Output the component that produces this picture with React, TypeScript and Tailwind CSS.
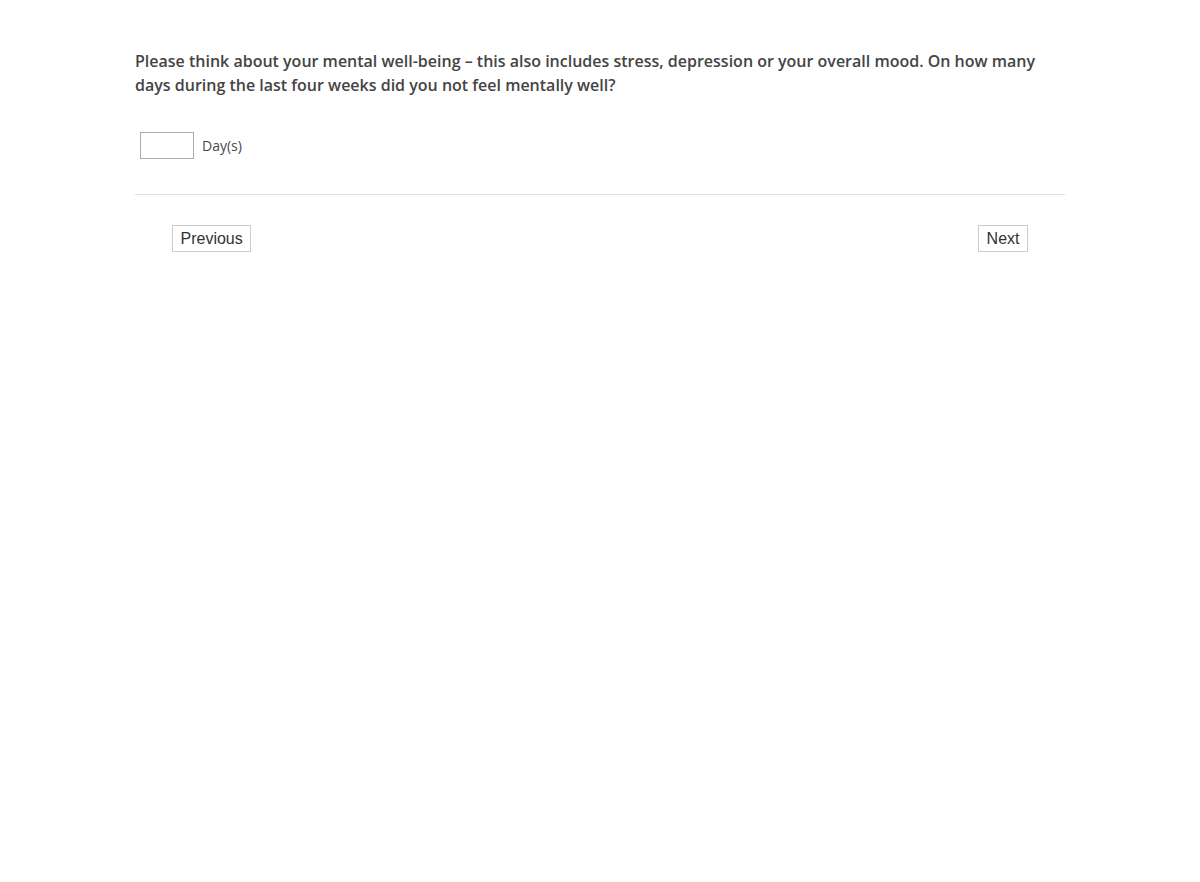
import React from "react";

export default function App() {
  return (
    <div className="min-h-[882px] bg-white">
      <div className="mx-auto w-[930px] pt-[49px]">
        <p
          className="text-[16px] leading-[24px] font-semibold text-[#444444]"
          style={{ fontFamily: '"Open Sans", sans-serif' }}
        >
          Please think about your mental well-being – this also includes stress, depression or your overall mood. On how many days during the last four weeks did you not feel mentally well?
        </p>
        <div className="mt-[35px] ml-[5px] flex items-center gap-[8px]">
          <input
            type="text"
            className="h-[27px] w-[54px] border border-[#aaaaaa] bg-white outline-none"
          />
          <span
            className="text-[14px] text-[#464854]"
            style={{ fontFamily: '"Open Sans", sans-serif' }}
          >
            Day(s)
          </span>
        </div>
        <div className="mt-[35px] h-px bg-[#dddddd]" />
        <div className="mt-[30px] flex justify-between px-[37px]">
          <button
            className="h-[27px] border border-[#cccccc] bg-white px-[7.5px] text-[16px] text-[#333333]"
            style={{ fontFamily: '"Liberation Sans", Arial, sans-serif' }}
          >
            Previous
          </button>
          <button
            className="h-[27px] border border-[#cccccc] bg-white px-[7.5px] text-[16px] text-[#333333]"
            style={{ fontFamily: '"Liberation Sans", Arial, sans-serif' }}
          >
            Next
          </button>
        </div>
      </div>
    </div>
  );
}
